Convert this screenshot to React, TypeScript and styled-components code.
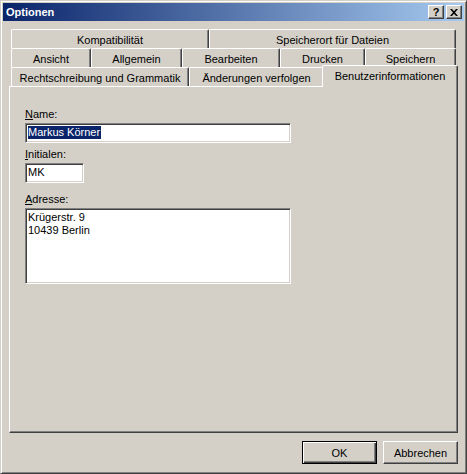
import styled, { createGlobalStyle } from 'styled-components';

const GlobalStyle = createGlobalStyle`
  html, body {
    margin: 0;
    padding: 0;
    background: #d4d0c8;
  }
  body {
    font-family: 'Liberation Sans', Arial, sans-serif;
    font-size: 11px;
    color: #000;
  }
`;

const face = '#d4d0c8';
const shadow = '#808080';
const darkShadow = '#404040';

interface TabT {
  label: string;
  width: number;
  selected?: boolean;
}

const tabRows: TabT[][] = [
  [
    { label: 'Kompatibilität', width: 198 },
    { label: 'Speicherort für Dateien', width: 247 },
  ],
  [
    { label: 'Ansicht', width: 80 },
    { label: 'Allgemein', width: 91 },
    { label: 'Bearbeiten', width: 98 },
    { label: 'Drucken', width: 85 },
    { label: 'Speichern', width: 91 },
  ],
  [
    { label: 'Rechtschreibung und Grammatik', width: 178 },
    { label: 'Änderungen verfolgen', width: 135 },
    { label: 'Benutzerinformationen', width: 132, selected: true },
  ],
];

export default function App() {
  return (
    <>
      <GlobalStyle />
      <Window>
        <TitleBar>
          <Title>Optionen</Title>
          <CaptionButtons>
            <CaptionButton>?</CaptionButton>
            <CaptionButton>
              <svg width="8" height="7" viewBox="0 0 8 7">
                <path d="M0 0h2l2 2.3L6 0h2L5 3.5 8 7H6L4 4.7 2 7H0l3-3.5z" fill="#000" />
              </svg>
            </CaptionButton>
          </CaptionButtons>
        </TitleBar>
        <Content>
          <TabStrip>
            {tabRows.map((row, rowIdx) => (
              <TabRow key={rowIdx}>
                {row.map(tab => (
                  <Tab key={tab.label} $w={tab.width} $selected={tab.selected}>
                    {tab.label}
                  </Tab>
                ))}
              </TabRow>
            ))}
          </TabStrip>
          <Panel>
            <FieldGroup>
              <Label>
                <u>N</u>ame:
              </Label>
              <Field $w={266}>
                <Selected>Markus Körner</Selected>
              </Field>
            </FieldGroup>
            <FieldGroup>
              <Label>
                <u>I</u>nitialen:
              </Label>
              <Field $w={59}>MK</Field>
            </FieldGroup>
            <FieldGroup $gap={10}>
              <Label>
                <u>A</u>dresse:
              </Label>
              <Field $w={266} $h={76}>
                Krügerstr. 9
                <br />
                10439 Berlin
              </Field>
            </FieldGroup>
          </Panel>
          <ButtonRow>
            <Button $default>OK</Button>
            <Button>Abbrechen</Button>
          </ButtonRow>
        </Content>
      </Window>
    </>
  );
}

const Window = styled.div`
  width: 467px;
  height: 474px;
  box-sizing: border-box;
  display: flex;
  flex-direction: column;
  background: ${face};
  border-top: 1px solid ${face};
  border-left: 1px solid ${face};
  border-right: 1px solid ${darkShadow};
  border-bottom: 1px solid ${darkShadow};
  box-shadow: inset 1px 1px #fff, inset -1px -1px ${shadow};
  padding: 2px;
`;

const TitleBar = styled.div`
  height: 18px;
  flex: none;
  display: flex;
  align-items: center;
  justify-content: space-between;
  padding: 0 2px 0 3px;
  background: linear-gradient(to right, #0a246a, #a6caf0);
`;

const Title = styled.span`
  color: #fff;
  font-weight: bold;
  font-size: 11px;
`;

const CaptionButtons = styled.div`
  display: flex;
  gap: 2px;
`;

const CaptionButton = styled.div`
  width: 16px;
  height: 14px;
  box-sizing: border-box;
  display: flex;
  align-items: center;
  justify-content: center;
  background: ${face};
  border-top: 1px solid #fff;
  border-left: 1px solid #fff;
  border-right: 1px solid ${darkShadow};
  border-bottom: 1px solid ${darkShadow};
  box-shadow: inset -1px -1px ${shadow};
  font-weight: bold;
  font-size: 11px;
  line-height: 12px;
`;

const Content = styled.div`
  flex: 1;
  display: flex;
  flex-direction: column;
  padding: 8px 6px 7px 6px;
  min-height: 0;
`;

const TabStrip = styled.div`
  display: flex;
  flex-direction: column;
  padding: 0 2px;
`;

const TabRow = styled.div`
  display: flex;
  height: 19px;
`;

const Tab = styled.div<{ $w: number; $selected?: boolean }>`
  width: ${p => p.$w}px;
  flex: none;
  box-sizing: border-box;
  display: flex;
  align-items: center;
  justify-content: center;
  background: ${face};
  border-top: 1px solid #fff;
  border-left: 1px solid #fff;
  border-right: 1px solid ${darkShadow};
  box-shadow: inset -1px 0 ${shadow};
  border-top-left-radius: 2px;
  border-top-right-radius: 2px;
  white-space: nowrap;
  height: 19px;
  padding-top: 1px;

  ${p =>
    p.$selected &&
    `
    position: relative;
    z-index: 1;
    width: ${p.$w + 4}px;
    height: 22px;
    margin: -2px -2px 0 -2px;
    padding-top: 0;
    padding-bottom: 2px;
  `}
`;

const Panel = styled.div`
  flex: 1;
  box-sizing: border-box;
  background: ${face};
  border-top: 1px solid #fff;
  border-left: 1px solid #fff;
  border-right: 1px solid ${darkShadow};
  border-bottom: 1px solid ${darkShadow};
  box-shadow: inset -1px -1px ${shadow};
  padding: 21px 15px 0 15px;
  display: flex;
  flex-direction: column;
  gap: 5px;
`;

const FieldGroup = styled.div<{ $gap?: number }>`
  display: flex;
  flex-direction: column;
  gap: 2px;
  margin-top: ${p => (p.$gap ? p.$gap - 5 : 0)}px;
`;

const Label = styled.label`
  line-height: 13px;
`;

const Field = styled.div<{ $w: number; $h?: number }>`
  width: ${p => p.$w}px;
  height: ${p => p.$h || 20}px;
  box-sizing: border-box;
  background: #fff;
  border-top: 1px solid ${shadow};
  border-left: 1px solid ${shadow};
  border-right: 1px solid #fff;
  border-bottom: 1px solid #fff;
  box-shadow: inset 1px 1px ${darkShadow}, inset -1px -1px ${face};
  padding: 2px 2px 0 2px;
  line-height: 13px;
  white-space: nowrap;
`;

const Selected = styled.span`
  background: #0a246a;
  color: #fff;
  display: inline-block;
  padding-right: 1px;
`;

const ButtonRow = styled.div`
  display: flex;
  justify-content: flex-end;
  gap: 6px;
  margin-top: 8px;
`;

const Button = styled.div<{ $default?: boolean }>`
  width: 75px;
  height: 23px;
  box-sizing: border-box;
  display: flex;
  align-items: center;
  justify-content: center;
  background: ${face};
  border-top: 1px solid #fff;
  border-left: 1px solid #fff;
  border-right: 1px solid ${darkShadow};
  border-bottom: 1px solid ${darkShadow};
  box-shadow: inset -1px -1px ${shadow};

  ${p =>
    p.$default &&
    `
    border: 1px solid #000;
    box-shadow: inset 1px 1px #fff, inset -1px -1px ${darkShadow}, inset -2px -2px ${shadow};
  `}
`;
